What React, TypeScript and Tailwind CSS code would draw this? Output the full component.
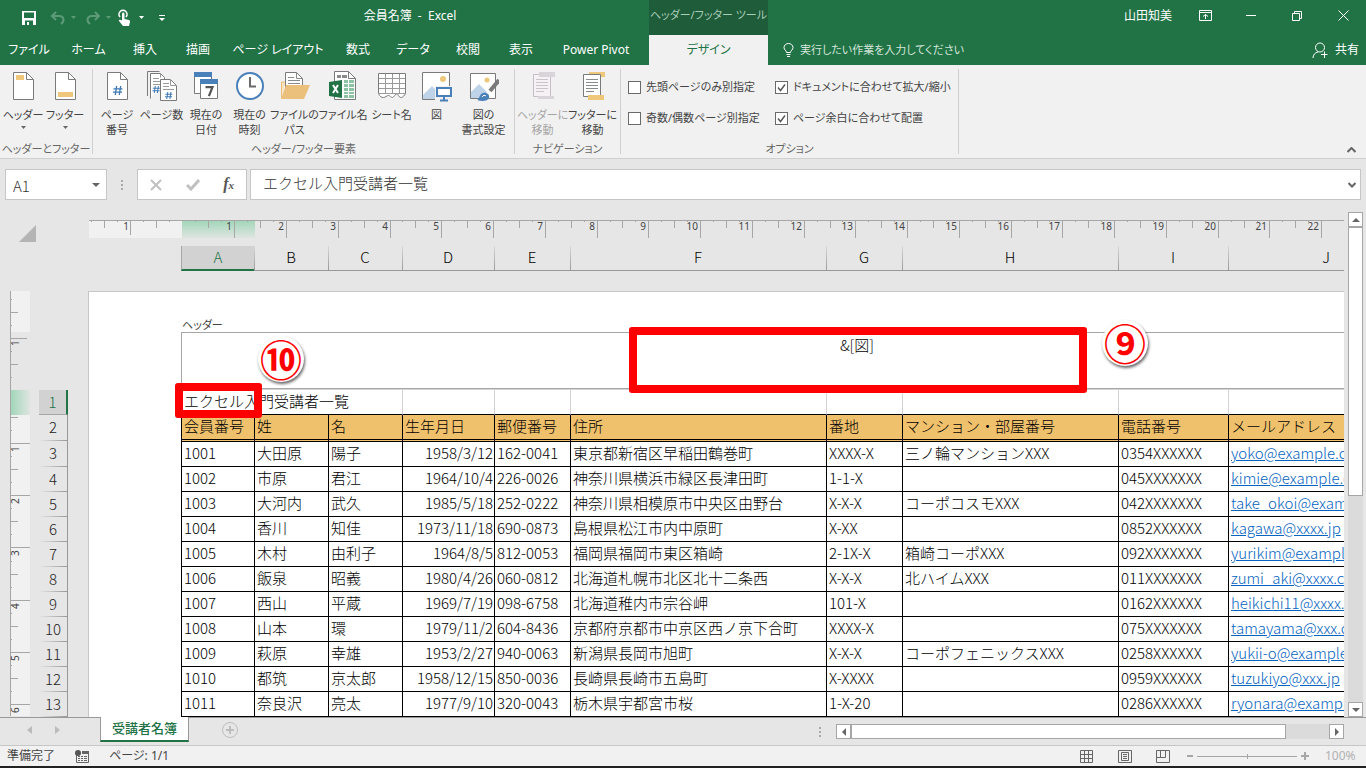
import type { ReactNode } from "react";

const UNIT = 51.76;

const tabs = [
  { label: "ファイル", width: "w-[58px]" },
  { label: "ホーム", width: "w-[61px]" },
  { label: "挿入", width: "w-[52px]" },
  { label: "描画", width: "w-[54px]" },
  { label: "ページ レイアウト", width: "w-[106px]" },
  { label: "数式", width: "w-[54px]" },
  { label: "データ", width: "w-[56px]" },
  { label: "校閲", width: "w-[54px]" },
  { label: "表示", width: "w-[52px]" },
  { label: "Power Pivot", width: "w-[98px]" },
];

const columns = [
  { name: "A", width: "w-[73px]" },
  { name: "B", width: "w-[74px]" },
  { name: "C", width: "w-[74px]" },
  { name: "D", width: "w-[92px]" },
  { name: "E", width: "w-[76px]" },
  { name: "F", width: "w-[256px]" },
  { name: "G", width: "w-[76px]" },
  { name: "H", width: "w-[216px]" },
  { name: "I", width: "w-[110px]" },
  { name: "J", width: "w-[196px]" },
];

const headings = ["会員番号", "姓", "名", "生年月日", "郵便番号", "住所", "番地", "マンション・部屋番号", "電話番号", "メールアドレス"];

const members = [
  ["1001", "大田原", "陽子", "1958/3/12", "162-0041", "東京都新宿区早稲田鶴巻町", "XXXX-X", "三ノ輪マンションXXX", "0354XXXXXX", "yoko@example.com"],
  ["1002", "市原", "君江", "1964/10/4", "226-0026", "神奈川県横浜市緑区長津田町", "1-1-X", "", "045XXXXXXX", "kimie@example.com"],
  ["1003", "大河内", "武久", "1985/5/18", "252-0222", "神奈川県相模原市中央区由野台", "X-X-X", "コーポコスモXXX", "042XXXXXXX", "take_okoi@example.com"],
  ["1004", "香川", "知佳", "1973/11/18", "690-0873", "島根県松江市内中原町", "X-XX", "", "0852XXXXXX", "kagawa@xxxx.jp"],
  ["1005", "木村", "由利子", "1964/8/5", "812-0053", "福岡県福岡市東区箱崎", "2-1X-X", "箱崎コーポXXX", "092XXXXXXX", "yurikim@example.com"],
  ["1006", "飯泉", "昭義", "1980/4/26", "060-0812", "北海道札幌市北区北十二条西", "X-X-X", "北ハイムXXX", "011XXXXXXX", "zumi_aki@xxxx.com"],
  ["1007", "西山", "平蔵", "1969/7/19", "098-6758", "北海道稚内市宗谷岬", "101-X", "", "0162XXXXXX", "heikichi11@xxxx.com"],
  ["1008", "山本", "環", "1979/11/2", "604-8436", "京都府京都市中京区西ノ京下合町", "XXXX-X", "", "075XXXXXXX", "tamayama@xxx.com"],
  ["1009", "萩原", "幸雄", "1953/2/27", "940-0063", "新潟県長岡市旭町", "X-X-X", "コーポフェニックスXXX", "0258XXXXXX", "yukii-o@example.com"],
  ["1010", "都筑", "京太郎", "1958/12/15", "850-0036", "長崎県長崎市五島町", "X-XXXX", "", "0959XXXXXX", "tuzukiyo@xxx.jp"],
  ["1011", "奈良沢", "亮太", "1977/9/10", "320-0043", "栃木県宇都宮市桜", "1-X-20", "", "0286XXXXXX", "ryonara@example.com"],
];

/* ---------- Ribbon icons ---------- */

function Icon({ children }: { children: ReactNode }) {
  return (
    <svg width="30" height="32" viewBox="0 0 30 32" fill="none" className="shrink-0" aria-hidden="true">
      {children}
    </svg>
  );
}

function Sheet() {
  return (
    <>
      <path d="M5.500 1.500h13l7 7v20h-20z" fill="#fff" stroke="#7a7a7a" />
      <path d="M18.500 1.500v7h7" stroke="#7a7a7a" />
    </>
  );
}

const HeaderIcon = () => (
  <Icon>
    <Sheet />
    <path d="M8 4h8v5H8z" fill="#eec77b" />
  </Icon>
);

const FooterIcon = () => (
  <Icon>
    <Sheet />
    <path d="M8 21h15v5H8z" fill="#eec77b" />
  </Icon>
);

const Hash = ({ x, y, s }: { x: number; y: number; s: number }) => (
  <path
    d={`M${x + s * 0.4} ${y}l${-s * 0.15} ${s}M${x + s * 0.85} ${y}l${-s * 0.15} ${s}M${x + s * 0.05} ${y + s * 0.32}h${s}M${x} ${y + s * 0.68}h${s}`}
    stroke="#3e78b5"
    strokeWidth={s > 8 ? 1.3 : 1}
  />
);

const PageNumberIcon = () => (
  <Icon>
    <Sheet />
    <Hash x={11} y={15} s={9} />
  </Icon>
);

const PageCountIcon = () => (
  <Icon>
    <path d="M.5 25V.5h12" stroke="#7a7a7a" />
    <path d="M3.500 27.500V2.500h10l4 4v5" fill="#fff" stroke="#7a7a7a" />
    <path d="M13.500 2.500v4M6 7.500h6M6 10.500h8M6 13.500h7" stroke="#9a9a9a" />
    <Hash x={5.5} y={15} s={7} />
    <path d="M13.500 8.500h10l6 6v15h-16z" fill="#fff" stroke="#7a7a7a" />
    <path d="M23.500 8.500v6h6M16 12.500h6M16 15.500h6M16 18.500h11" stroke="#9a9a9a" />
    <Hash x={18} y={21} s={7} />
  </Icon>
);

const DateIcon = () => (
  <Icon>
    <path d="M3.500 2.500h17v20h-17z" fill="#fff" stroke="#7a7a7a" />
    <path d="M3 1h18v5H3z" fill="#4a80ba" />
    <path d="M9.500 9.500h17v18h-17z" fill="#fff" stroke="#7a7a7a" />
    <path d="M9 8h18v5H9z" fill="#4a80ba" />
    <path d="M14.500 16.200h7l-3.600 9" stroke="#555" strokeWidth="2.200" />
  </Icon>
);

const TimeIcon = () => (
  <Icon>
    <circle cx="15" cy="15" r="13" fill="#fff" stroke="#4a80ba" strokeWidth="2" />
    <path d="M15 6v9.500h6" stroke="#6a6a6a" strokeWidth="2" />
  </Icon>
);

const PathIcon = () => (
  <Icon>
    <path d="M1.500 27V11h4" fill="#fbe3bb" stroke="#e9bd77" />
    <path d="M5.500 26V1.500h11l6 6V17" fill="#fff" stroke="#7a7a7a" />
    <path d="M16.500 1.500v6h6M8 6.500h6M8 9.500h12M8 12.500h12" stroke="#8a8a8a" />
    <path d="M6 14h24l-6 14H1z" fill="#eac07c" />
  </Icon>
);

const FileNameIcon = () => (
  <Icon>
    <path d="M6.500.5h14l7 7v21h-21z" fill="#fff" stroke="#7a7a7a" />
    <path d="M20.500.5v7h7" stroke="#7a7a7a" />
    <path d="M9 4h4v3H9zM14 4h5v3h-5z" fill="#8a8a8a" />
    <path d="M16 9h4v3h-4zM21 9h5v3h-5zM16 13h4v3h-4zM21 13h5v3h-5zM16 17h4v3h-4zM21 17h5v3h-5zM16 21h4v2h-4zM21 21h5v2h-5zM16 24h4v3h-4zM21 24h5v3h-5z" fill="#8cc3a3" />
    <path d="M1 11l13-2v18L1 25z" fill="#217346" />
    <path d="M5 14l5 8M10 14l-5 8" stroke="#fff" strokeWidth="2" />
  </Icon>
);

const SheetNameIcon = () => (
  <Icon>
    <path d="M1.500 2.500h27v20l-5 4c-2 0-2-2-4-3-2 1-3 3-5 3-1 0-2-2-3-2-2 1-3 2-5 2-2 0-3-2-5-2z" fill="#fff" />
    <path d="M1.500 22.500v-20h27v20M1.500 22.500c1 3 3 4 5 4s3-2 5-2 2 2 4 2c1 0 3-4 5-4 1 3 2 4 4 4 1 0 3-2 4-4" stroke="#7a7a7a" />
    <path d="M8.500 3v19M15.500 3v19M22.500 3v19M2 7.500h26M2 12.500h26M2 17.500h26M2 22.500h26" stroke="#9a9a9a" />
  </Icon>
);

const PictureIcon = () => (
  <Icon>
    <path d="M.5 1.500h27v27H.5z" fill="#fff" stroke="#7a7a7a" />
    <path d="M1 24l9-9 7 7v6H1z" fill="#bfd3e8" />
    <circle cx="21" cy="8" r="3" fill="#eec77b" />
    <path d="M13 15h17v16H13z" fill="#f1f1f1" />
    <path d="M15 17h14v8H15z" fill="#fff" stroke="#4a80ba" strokeWidth="2" />
    <path d="M22 26v3M18 29.500h8" stroke="#4a80ba" strokeWidth="2" />
  </Icon>
);

const PictureFormatIcon = () => (
  <Icon>
    <path d="M1.500 2.500h25v25h-25z" fill="#fff" stroke="#7a7a7a" />
    <path d="M2 21l8-8 8 8-4 6H2z" fill="#bfd3e8" />
    <circle cx="18" cy="9" r="2.500" fill="#eec77b" />
    <path d="M30 9l-9 11" stroke="#7a7a7a" strokeWidth="4" />
    <path d="M8 29c3-1 2-6 6-7s7 2 6 5-7 4-12 2z" fill="#4a80ba" />
    <path d="M13 26c1-2 3-2 4-1" stroke="#fff" />
  </Icon>
);

const GoHeaderIcon = () => (
  <Icon>
    <path d="M5.500 3.500h17v22h-17z" fill="#f5f1f5" stroke="#c5bfc5" />
    <path d="M8 8.500h12M8 11.500h12M8 14.500h12M8 17.500h12M8 20.500h8" stroke="#c9c4c9" />
    <path d="M11 1h16v5H11zM10 25h16v3H10z" fill="#d9d4d9" />
  </Icon>
);

const GoFooterIcon = () => (
  <Icon>
    <path d="M11 1h16v5H11z" fill="#eec77b" />
    <path d="M5.500 3.500h17v22h-17z" fill="#fff" stroke="#7a7a7a" />
    <path d="M8 8.500h12M8 11.500h12M8 14.500h12M8 17.500h12M8 20.500h8" stroke="#8a8a8a" />
    <path d="M10 24h16v5H10z" fill="#eec77b" />
  </Icon>
);

/* ---------- Ribbon pieces ---------- */

function RibbonButton({ icon, lines, width, menu, disabled }: { icon: ReactNode; lines: string[]; width: string; menu?: boolean; disabled?: boolean }) {
  return (
    <button disabled={disabled} className={`${width} flex shrink-0 flex-col items-center whitespace-nowrap text-[11px] leading-[15px] text-[#444] disabled:text-[#a5a5a5]`}>
      {icon}
      <span className="mt-1 flex flex-col items-center">
        {lines.map((line) => (
          <span key={line}>{line}</span>
        ))}
      </span>
      {menu && (
        <svg width="5" height="3" viewBox="0 0 5 3" className="mt-1" aria-hidden="true">
          <path d="M0 0h5L2.500 3z" fill="#666" />
        </svg>
      )}
    </button>
  );
}

function RibbonGroup({ label, width, children }: { label: string; width: string; children: ReactNode }) {
  return (
    <section aria-label={label} className={`${width} flex shrink-0 flex-col justify-between border-r border-[#d0d0d0]`}>
      <div className="flex pl-[2px] pt-[2px]">{children}</div>
      <p className="whitespace-nowrap text-center text-[11px] leading-[10px] text-[#666]">{label}</p>
    </section>
  );
}

function Check({ label, checked }: { label: string; checked?: boolean }) {
  return (
    <label className="flex items-center gap-[5px] whitespace-nowrap text-[11px] leading-4 text-[#444]">
      <span className="relative block size-[13px]">
        <input type="checkbox" defaultChecked={checked} className="peer block size-[13px] appearance-none border border-[#6a6a6a] bg-white" />
        <svg viewBox="0 0 13 13" className="pointer-events-none absolute inset-0 hidden size-[13px] peer-checked:block" aria-hidden="true">
          <path d="M3 6.500l2.500 3L10 3.500" fill="none" stroke="#555" strokeWidth="1.400" />
        </svg>
      </span>
      {label}
    </label>
  );
}

function TitleBar() {
  return (
    <div className="flex h-[35px] items-stretch text-[12px] text-white">
      <div className="flex w-[171px] shrink-0 items-center pl-[21px]">
        <button aria-label="上書き保存">
          <svg width="16" height="16" viewBox="0 0 16 16" aria-hidden="true">
            <path d="M1 1h14v14H1z" fill="#fff" />
            <path d="M3 2.500h10V8H3zM4 10.500h8V15H4z" fill="#217346" />
            <path d="M6 12h2v3H6z" fill="#fff" />
          </svg>
        </button>
        <button aria-label="元に戻す" className="ml-[13px] flex items-center gap-[5px]">
          <svg width="16" height="14" viewBox="0 0 16 14" fill="none" stroke="#5c9a78" strokeWidth="2" aria-hidden="true">
            <path d="M6 1L2 5l4 4M2.500 5H9c5 0 6 5 2 8" />
          </svg>
          <svg width="5" height="3" aria-hidden="true"><path d="M0 0h5L2.500 3z" fill="#5c9a78" /></svg>
        </button>
        <button aria-label="やり直し" className="ml-[9px] flex items-center gap-[5px]">
          <svg width="16" height="14" viewBox="0 0 16 14" fill="none" stroke="#5c9a78" strokeWidth="2" aria-hidden="true">
            <path d="M10 1l4 4-4 4M13.500 5H7c-5 0-6 5-2 8" />
          </svg>
          <svg width="5" height="3" aria-hidden="true"><path d="M0 0h5L2.500 3z" fill="#5c9a78" /></svg>
        </button>
        <button aria-label="タッチ/マウス モード" className="ml-[6px] flex items-center gap-[8px]">
          <svg width="14" height="18" viewBox="0 0 14 18" aria-hidden="true">
            <path d="M3 8a4 4 0 1 1 6 0" fill="none" stroke="#fff" strokeWidth="1.600" />
            <path d="M5 5c0-2 2.500-2 2.500 0v5l4.500 1c1 .5 1 1 1 2l-1 4H6l-4-5c-1-1 1-2 3-.5z" fill="#fff" />
          </svg>
          <svg width="5" height="3" aria-hidden="true"><path d="M0 0h5L2.500 3z" fill="#fff" /></svg>
        </button>
        <button aria-label="カスタマイズ" className="ml-[15px]">
          <svg width="6" height="6" aria-hidden="true"><path d="M0 0h6v1H0zM0 3h6L3 6z" fill="#fff" /></svg>
        </button>
      </div>
      <h1 className="flex w-[478px] shrink-0 items-center justify-center whitespace-pre pb-1">会員名簿  -  Excel</h1>
      <div className="flex w-[119px] shrink-0 items-center justify-center whitespace-nowrap bg-[#1e5c3a] pb-1 text-[11px] text-[#a9cdb8]">ヘッダー/フッター ツール</div>
      <div className="flex flex-1 items-center justify-end pb-1 pr-[10px]">山田知美</div>
      <button aria-label="リボンの表示オプション" className="flex w-[46px] items-center justify-center pb-1">
        <svg width="13" height="11" viewBox="0 0 13 11" fill="none" stroke="#fff" aria-hidden="true">
          <path d="M.5.5h12v10H.5zM.5 2.500h12M6.500 9V4.500M4 6.500l2.500-2 2.500 2" />
        </svg>
      </button>
      <button aria-label="最小化" className="flex w-[46px] items-center justify-center pb-1">
        <svg width="10" height="1" aria-hidden="true"><path d="M0 0h10v1H0z" fill="#fff" /></svg>
      </button>
      <button aria-label="元に戻す (縮小)" className="flex w-[46px] items-center justify-center pb-1">
        <svg width="10" height="10" viewBox="0 0 10 10" fill="none" stroke="#fff" aria-hidden="true">
          <path d="M.5 2.500h7v7h-7zM2.500 2.500v-2h7v7h-2" />
        </svg>
      </button>
      <button aria-label="閉じる" className="flex w-[46px] items-center justify-center pb-1">
        <svg width="11" height="11" viewBox="0 0 11 11" stroke="#fff" aria-hidden="true">
          <path d="M.5.5l10 10M10.500.5l-10 10" />
        </svg>
      </button>
    </div>
  );
}

function TabBar() {
  return (
    <nav className="flex h-[30px] text-[12px] text-white">
      {tabs.map((t) => (
        <button key={t.label} className={`${t.width} shrink-0 whitespace-nowrap`}>{t.label}</button>
      ))}
      <button className="ml-1 w-[119px] shrink-0 bg-[#f1f1f1] text-[#217346]">デザイン</button>
      <button className="ml-[15px] flex shrink-0 items-center gap-[6px] whitespace-nowrap text-[11px] text-[#d3e5da]">
        <svg width="11" height="14" viewBox="0 0 11 14" fill="none" stroke="#fff" aria-hidden="true">
          <path d="M3.500 9.500C3.500 7.500 1 7 1 4.500a4.500 4 0 0 1 9 0C10 7 7.500 7.500 7.500 9.500zM3.500 11.500h4M4 13.500h3" />
        </svg>
        実行したい作業を入力してください
      </button>
      <button className="ml-auto flex items-center gap-[7px] pr-[7px]">
        <svg width="16" height="17" viewBox="0 0 16 17" fill="none" stroke="#fff" aria-hidden="true">
          <circle cx="8" cy="5.500" r="4.500" />
          <path d="M1 16c0-3 2-5.500 5-6M9 12.500h6.500M12.500 9.500V16" />
        </svg>
        共有
      </button>
    </nav>
  );
}

function Ribbon() {
  return (
    <div className="flex h-[94px] border-b border-[#d0d0d0] bg-[#f1f1f1] pb-1 pt-1">
      <RibbonGroup label="ヘッダーとフッター" width="w-[93px]">
        <RibbonButton icon={<HeaderIcon />} lines={["ヘッダー"]} width="w-[42px]" menu />
        <RibbonButton icon={<FooterIcon />} lines={["フッター"]} width="w-[42px]" menu />
      </RibbonGroup>
      <RibbonGroup label="ヘッダー/フッター要素" width="w-[422px]">
        <RibbonButton icon={<PageNumberIcon />} lines={["ページ", "番号"]} width="w-[44px]" />
        <RibbonButton icon={<PageCountIcon />} lines={["ページ数"]} width="w-[45px]" />
        <RibbonButton icon={<DateIcon />} lines={["現在の", "日付"]} width="w-[44px]" />
        <RibbonButton icon={<TimeIcon />} lines={["現在の", "時刻"]} width="w-[43px]" />
        <RibbonButton icon={<PathIcon />} lines={["ファイルの", "パス"]} width="w-[47px]" />
        <RibbonButton icon={<FileNameIcon />} lines={["ファイル名"]} width="w-[50px]" />
        <RibbonButton icon={<SheetNameIcon />} lines={["シート名"]} width="w-[47px]" />
        <RibbonButton icon={<PictureIcon />} lines={["図"]} width="w-[43px]" />
        <RibbonButton icon={<PictureFormatIcon />} lines={["図の", "書式設定"]} width="w-[51px]" />
      </RibbonGroup>
      <RibbonGroup label="ナビゲーション" width="w-[106px]">
        <RibbonButton icon={<GoHeaderIcon />} lines={["ヘッダーに", "移動"]} width="w-[51px]" disabled />
        <RibbonButton icon={<GoFooterIcon />} lines={["フッターに", "移動"]} width="w-[49px]" />
      </RibbonGroup>
      <RibbonGroup label="オプション" width="w-[338px]">
        <div className="grid w-full grid-cols-[147px_1fr] gap-y-[15px] pl-[5px] pt-2">
          <Check label="先頭ページのみ別指定" />
          <Check label="ドキュメントに合わせて拡大/縮小" checked />
          <Check label="奇数/偶数ページ別指定" />
          <Check label="ページ余白に合わせて配置" checked />
        </div>
      </RibbonGroup>
      <button aria-label="リボンを折りたたむ" className="ml-auto mr-[10px] self-end pb-[1px]">
        <svg width="9" height="6" viewBox="0 0 9 6" fill="none" stroke="#666" strokeWidth="2" aria-hidden="true">
          <path d="M.5 5l4-4 4 4" />
        </svg>
      </button>
    </div>
  );
}

function FormulaBar() {
  return (
    <div className="flex h-[41px] pl-[5px] pr-[5px] pt-[10px] [font-feature-settings:normal]">
      <div className="flex w-[102px] items-center border border-[#c6c6c6] bg-white pr-[6px]">
        <input aria-label="名前ボックス" defaultValue="A1" className="w-full min-w-0 bg-transparent pl-[7px] pt-[3px] font-['Noto_Sans_CJK_JP',sans-serif] text-[15px] font-light text-[#333] outline-none" />
        <button aria-label="名前の一覧">
          <svg width="8" height="4" aria-hidden="true"><path d="M0 0h8L4 4z" fill="#666" /></svg>
        </button>
      </div>
      <div className="flex w-[30px] flex-col items-center justify-center gap-[2px]">
        <i className="size-[2px] bg-[#aaa]" />
        <i className="size-[2px] bg-[#aaa]" />
        <i className="size-[2px] bg-[#aaa]" />
      </div>
      <div className="flex w-[110px] items-center justify-between border border-[#c6c6c6] bg-white pl-[12px] pr-[12px]">
        <button aria-label="キャンセル">
          <svg width="12" height="12" viewBox="0 0 12 12" stroke="#c0c0c0" strokeWidth="2" aria-hidden="true"><path d="M1 1l10 10M11 1L1 11" /></svg>
        </button>
        <button aria-label="入力">
          <svg width="14" height="12" viewBox="0 0 14 12" fill="none" stroke="#c0c0c0" strokeWidth="3" aria-hidden="true"><path d="M1 6l4 4 8-9" /></svg>
        </button>
        <button aria-label="関数の挿入" className="font-['Liberation_Serif',serif] text-[16px] font-bold italic leading-4 text-[#555]">
          f<span className="text-[11px]">x</span>
        </button>
      </div>
      <div className="ml-[3px] flex min-w-0 flex-1 items-center border border-[#c6c6c6] bg-white pr-[4px]">
        <input aria-label="数式バー" defaultValue="エクセル入門受講者一覧" className="min-w-0 flex-1 bg-transparent pb-[2px] pl-[12px] font-['Noto_Sans_CJK_JP',sans-serif] text-[15px] font-light text-[#333] outline-none" />
        <button aria-label="数式バーの展開">
          <svg width="8" height="6" viewBox="0 0 8 6" fill="none" stroke="#666" strokeWidth="2" aria-hidden="true"><path d="M.5 1L4 4.500 7.500 1" /></svg>
        </button>
      </div>
    </div>
  );
}

/* ---------- Rulers ---------- */

function HorizontalRuler() {
  const origin = 93.5;
  const ticks = Array.from({ length: 96 }, (_, i) => i - 7);
  return (
    <svg height="18" className="block w-full overflow-visible font-['Noto_Sans',sans-serif] font-normal" aria-hidden="true">
      <defs>
        <linearGradient id="rulerCol" x1="0" y1="0" x2="0" y2="1">
          <stop offset="0" stopColor="#9fd5b7" />
          <stop offset="1" stopColor="#dfe5e1" />
        </linearGradient>
      </defs>
      <rect width="93" height="18" fill="#f1f1f1" />
      <rect x="93" width="73" height="18" fill="url(#rulerCol)" />
      <rect width="100%" height="1" fill="#a6a6a6" />
      {ticks.filter((i) => i !== 0).map((i) => {
        const x = Math.round(origin + (i * UNIT) / 4) + (i < 0 ? -0.5 : 0.5);
        const h = i % 4 === 0 ? (i < 0 ? 15 : 18) : i % 2 === 0 ? 8 : 2;
        return <path key={i} d={`M${x} 0V${h}`} stroke="#a6a6a6" />;
      })}
      {ticks.filter((i) => i % 4 === 0 && i !== 0).map((i) => (
        <text key={i} x={Math.round(origin + (i * UNIT) / 4) - 2} y="10" fontSize="10" textAnchor="end" fill="#444">
          {Math.abs(i / 4)}
        </text>
      ))}
    </svg>
  );
}

function VerticalRuler() {
  const body = Array.from({ length: 24 }, (_, i) => i + 2);
  const head = Array.from({ length: 7 }, (_, i) => i + 1);
  return (
    <svg width="20" height="425" className="block shrink-0 overflow-visible font-['Noto_Sans',sans-serif] font-normal" aria-hidden="true">
      <defs>
        <linearGradient id="rulerRow">
          <stop offset="0" stopColor="#9fd5b7" />
          <stop offset="1" stopColor="#dfe5e1" />
        </linearGradient>
      </defs>
      <rect width="20" height="41" fill="#f1f1f1" />
      <rect y="99" width="20" height="25" fill="url(#rulerRow)" />
      <rect y="124" width="20" height="301" fill="#f1f1f1" />
      <rect width="1" height="425" fill="#a6a6a6" />
      {head.map((i) => {
        const y = Math.round(-5 + i * 13) + 0.5;
        return <path key={i} d={`M0 ${y}H${i % 4 === 0 ? 17 : i % 2 === 0 ? 8 : 2}`} stroke="#a6a6a6" />;
      })}
      {body.map((i) => {
        const y = Math.round(101 + i * 13.04) - 0.5;
        return <path key={i} d={`M0 ${y}H${i % 4 === 0 ? 20 : i % 2 === 0 ? 8 : 2}`} stroke="#a6a6a6" />;
      })}
      <text transform="translate(9 55) rotate(-90)" fontSize="10" fill="#444">1</text>
      {[1, 2, 3, 4, 5, 6].map((n) => (
        <text key={n} transform={`translate(9 ${Math.round(101 + n * 52.16) + 8}) rotate(-90)`} fontSize="10" fill="#444">
          {n}
        </text>
      ))}
    </svg>
  );
}

/* ---------- Sheet ---------- */

function RowHeaders() {
  return (
    <div className="ml-[9px] mt-[99px] w-[29px] shrink-0 text-center text-[15px] leading-[23px]">
      {Array.from({ length: 13 }, (_, i) => i + 1).map((n) => {
        if (n === 1) {
          return <div key={n} className="h-[25px] border-b border-r-2 border-b-[#a6a6a6] border-r-[#217346] bg-[#d2d2d2] text-[#217346]">1</div>;
        }
        return (
          <div key={n} className={`${n < 4 ? "h-[26px]" : "h-[25px]"} border-r border-[#999] bg-[linear-gradient(to_right,#e6e6e6,#999)] bg-[length:100%_1px] bg-bottom bg-no-repeat text-[#222]`}>
            {n}
          </div>
        );
      })}
    </div>
  );
}

function ColumnHeaders() {
  return (
    <div className="ml-[181px] mt-2 flex h-[25px] text-[15px] leading-[22px]">
      {columns.map((c) => {
        if (c.name === "A") {
          return <div key={c.name} className={`${c.width} shrink-0 border-b-2 border-l border-b-[#217346] border-l-[#a6a6a6] bg-[#d2d2d2] text-center text-[#217346]`}>A</div>;
        }
        return (
          <div key={c.name} className={`${c.width} shrink-0 border-b border-[#999] bg-[linear-gradient(to_bottom,#d8d8d8,#999)] bg-[length:1px_100%] bg-left bg-no-repeat text-center text-black`}>
            {c.name}
          </div>
        );
      })}
    </div>
  );
}

function MemberTable() {
  return (
    <table className="w-[1244px] table-fixed border-separate border-spacing-0 border-l border-black text-[15px] leading-[22px] text-black">
      <colgroup>
        {columns.map((c) => (
          <col key={c.name} className={c.width} />
        ))}
      </colgroup>
      <tbody>
        <tr className="h-[25px]">
          <td colSpan={3} className="border-b border-r border-b-black border-r-[#d4d4d4] p-0 pb-[2px] pl-[2px]">エクセル入門受講者一覧</td>
          {columns.slice(3).map((c) => (
            <td key={c.name} className="border-b border-r border-b-black border-r-[#d4d4d4] p-0" />
          ))}
        </tr>
        <tr className="h-[27px] bg-[#f0c16c]">
          {headings.map((h) => (
            <th key={h} scope="col" className="whitespace-nowrap border-b-[3px] border-r border-black p-0 pb-[2px] pl-[2px] text-left font-light [border-bottom-style:double]">{h}</th>
          ))}
        </tr>
        {members.map((m) => (
          <tr key={m[0]} className="h-[25px]">
            {m.map((value, i) => (
              <td key={i} className={`whitespace-nowrap border-b border-r border-black p-0 pb-[2px] pl-[2px] ${i === 3 ? "pr-px text-right" : "text-left"}`}>
                {i === 9 ? <a href={`mailto:${value}`} className="text-[#0563c1] underline">{value}</a> : value}
              </td>
            ))}
          </tr>
        ))}
      </tbody>
    </table>
  );
}

function Badge({ mark, place }: { mark: string; place: string }) {
  return (
    <span className={`${place} absolute flex size-[46px] items-center justify-center rounded-full bg-white pb-[3px] text-[42px] font-bold leading-[42px] text-[#f00] shadow-[1px_2px_3px_#0009]`}>
      {mark}
    </span>
  );
}

function Page() {
  return (
    <div className="relative ml-5 min-w-0 flex-1 overflow-hidden border-l border-t border-[#c6c6c6] bg-white pl-[92px]">
      <div className="flex h-10 items-end pb-px pl-px font-['Noto_Sans','Noto_Sans_CJK_JP',sans-serif] text-[11px] font-normal leading-3 text-[#444] [font-feature-settings:'palt']">ヘッダー</div>
      <div className="h-[57px] w-[1352px] border border-[#a6a6a6] pt-px text-center text-[15px] leading-[22px]">&amp;[図]</div>
      <div className="h-px bg-[#d4d4d4]" />
      <MemberTable />
      <div className="absolute left-[540px] top-[35px] h-[66px] w-[458px] rounded-[3px] border-8 border-[#f00]" />
      <div className="absolute left-[86px] top-[91px] h-[35px] w-[87px] rounded-[3px] border-8 border-[#f00]" />
      <Badge mark="⑩" place="left-[169px] top-[44px]" />
      <Badge mark="⑨" place="left-[1013px] top-[28px]" />
    </div>
  );
}

function ScrollButton({ label, d }: { label: string; d: string }) {
  return (
    <button aria-label={label} className="flex size-[15px] shrink-0 items-center justify-center border border-[#a6a6a6] bg-white">
      <svg width="8" height="8" viewBox="0 0 8 8" aria-hidden="true"><path d={d} fill="#666" /></svg>
    </button>
  );
}

function Workspace() {
  return (
    <div className="flex min-w-0 flex-1 font-['Noto_Sans_CJK_JP',sans-serif] font-light">
      <div className="flex min-w-0 flex-1 flex-col overflow-hidden pt-5">
        <div className="flex h-[18px]">
          <div className="w-[89px] shrink-0 pl-[19px] pt-[5px]">
            <svg width="17" height="17" className="overflow-visible" aria-hidden="true"><path d="M17 0v17H0z" fill="#b4b4b4" /></svg>
          </div>
          <div className="min-w-0 flex-1">
            <HorizontalRuler />
          </div>
        </div>
        <ColumnHeaders />
        <div className="mt-5 flex flex-1 pl-[10px]">
          <VerticalRuler />
          <RowHeaders />
          <Page />
        </div>
      </div>
      <div className="flex w-[22px] shrink-0 flex-col pl-1 pr-[3px] pt-3">
        <div className="flex flex-1 flex-col bg-[#dbdbdb]">
          <ScrollButton label="上へスクロール" d="M0 6h8L4 2z" />
          <div className="h-[269px] border border-[#a6a6a6] bg-white" />
          <div className="mt-auto">
            <ScrollButton label="下へスクロール" d="M0 2h8L4 6z" />
          </div>
        </div>
      </div>
    </div>
  );
}

function SheetTabs() {
  return (
    <div className="flex h-7 items-start">
      <div className="flex h-[25px] w-[100px] shrink-0 items-center gap-[23px] border-t border-[#999] pl-[27px]">
        <svg width="5" height="8" aria-hidden="true"><path d="M5 0v8L0 4z" fill="#bbb" /></svg>
        <svg width="5" height="8" aria-hidden="true"><path d="M0 0v8l5-4z" fill="#bbb" /></svg>
      </div>
      <button className="h-[25px] w-[89px] shrink-0 whitespace-nowrap border-x border-b-2 border-x-[#999] border-b-[#217346] bg-white text-[13px] font-medium text-[#217346]">受講者名簿</button>
      <div className="flex h-[25px] flex-1 items-center border-t border-[#999] pl-[33px]">
        <button aria-label="新しいシート">
          <svg width="16" height="16" viewBox="0 0 16 16" fill="none" stroke="#bdbdbd" aria-hidden="true">
            <circle cx="8" cy="8" r="7.500" />
            <path d="M8 4v8M4 8h8" strokeWidth="2" />
          </svg>
        </button>
      </div>
      <div className="flex h-[25px] w-[547px] shrink-0 items-center border-t border-[#999] pr-[22px] pt-[3px]">
        <div className="flex w-[17px] flex-col gap-[2px]">
          <i className="size-[2px] bg-[#aaa]" />
          <i className="size-[2px] bg-[#aaa]" />
          <i className="size-[2px] bg-[#aaa]" />
        </div>
        <div className="flex flex-1 bg-[#dbdbdb]">
          <ScrollButton label="左へスクロール" d="M6 0v8L2 4z" />
          <div className="w-[435px] border border-[#a6a6a6] bg-white" />
          <div className="ml-auto flex">
            <ScrollButton label="右へスクロール" d="M2 0v8l4-4z" />
          </div>
        </div>
      </div>
    </div>
  );
}

function StatusBar() {
  return (
    <footer className="flex h-[21px] items-center border-t border-[#c6c6c6] bg-[#f1f1f1] px-[7px] text-[12px] text-[#444]">
      <span>準備完了</span>
      <svg width="14" height="13" viewBox="0 0 14 13" className="ml-5" aria-hidden="true">
        <path d="M1.500 5v7.500h12V1.500H7" fill="none" stroke="#666" />
        <circle cx="3" cy="3" r="3" fill="#555" />
        <path d="M7 1h7v3H7zM3 6h2v1H3zM6 6h2v1H6zM9 6h3v1H9zM3 8h2v1H3zM6 8h2v1H6zM9 8h3v1H9zM3 10h2v1H3zM6 10h2v1H6zM9 10h3v1H9z" fill="#666" />
      </svg>
      <span className="ml-5">ページ: 1/1</span>
      <div className="ml-auto flex items-center">
        <button aria-label="標準">
          <svg width="13" height="13" viewBox="0 0 13 13" fill="none" stroke="#666" aria-hidden="true"><path d="M.5.5h12v12H.5zM4.500.5v12M8.500.5v12M.5 4.500h12M.5 8.500h12" /></svg>
        </button>
        <button aria-label="ページ レイアウト" className="ml-[25px]">
          <svg width="14" height="13" viewBox="0 0 14 13" fill="none" stroke="#666" aria-hidden="true"><path d="M.5.5h13v12H.5zM3.500 2.500h7v8h-7zM5 4.500h4M5 6.500h4M5 8.500h4" /></svg>
        </button>
        <button aria-label="改ページ プレビュー" className="ml-6">
          <svg width="14" height="13" viewBox="0 0 14 13" fill="none" stroke="#666" aria-hidden="true"><path d="M.5.5h13v12H.5zM4.500.5v7M9.500.5v7H.5" /></svg>
        </button>
        <button aria-label="縮小" className="ml-[17px]">
          <svg width="6" height="2" aria-hidden="true"><path d="M0 0h6v2H0z" fill="#a6a6a6" /></svg>
        </button>
        <input
          type="range"
          aria-label="ズーム"
          disabled
          className="ml-1 h-[5px] w-[100px] appearance-none bg-[linear-gradient(#a6a6a6,#a6a6a6)] bg-[length:100%_1px] bg-center bg-no-repeat [&::-webkit-slider-thumb]:h-[5px] [&::-webkit-slider-thumb]:w-px [&::-webkit-slider-thumb]:appearance-none [&::-webkit-slider-thumb]:bg-[#a6a6a6]"
        />
        <button aria-label="拡大" className="ml-1">
          <svg width="8" height="8" aria-hidden="true"><path d="M3 0h2v3h3v2H5v3H3V5H0V3h3z" fill="#a6a6a6" /></svg>
        </button>
        <span className="ml-4 w-[34px] text-[#b1b1b1]">100%</span>
      </div>
    </footer>
  );
}

export default function App() {
  return (
    <div className="flex min-h-screen flex-col overflow-hidden bg-[#e6e6e6] font-['Noto_Sans','Noto_Sans_CJK_JP',sans-serif] [font-feature-settings:'palt']">
      <header className="bg-[#217346]">
        <TitleBar />
        <TabBar />
      </header>
      <Ribbon />
      <FormulaBar />
      <div className="flex flex-1 [font-feature-settings:normal]">
        <Workspace />
      </div>
      <SheetTabs />
      <StatusBar />
      <div className="h-[2px] bg-[#222]" />
    </div>
  );
}
